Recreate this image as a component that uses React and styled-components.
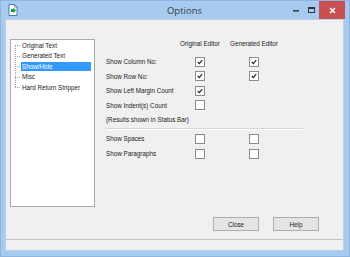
import React from 'react';
import styled, { createGlobalStyle } from 'styled-components';

const GlobalStyle = createGlobalStyle`
  html, body { margin: 0; padding: 0; }
  body { background: #a6caf0; }
`;

const Frame = styled.div`
  width: 350px;
  height: 257px;
  box-sizing: border-box;
  background: #a6caf0;
  border: 1px solid #8fb4e0;
  display: flex;
  flex-direction: column;
  padding: 0 5px 5px 4px;
  font-family: "Liberation Sans", Arial, sans-serif;
`;

const TitleBar = styled.div`
  height: 18px;
  display: grid;
  grid-template-columns: 1fr auto 1fr;
  align-items: center;
`;

const TitleLeft = styled.div`
  display: flex;
  align-items: center;
  padding-left: 3px;
`;

const TitleText = styled.div`
  font-family: "Open Sans", "Liberation Sans", sans-serif;
  font-size: 9.5px;
  color: #3a3a3a;
  padding-left: 20px;
`;

const Controls = styled.div`
  display: flex;
  justify-content: flex-end;
  align-items: flex-start;
  height: 100%;
  margin-right: -1px;
`;

const CtrlButton = styled.div`
  width: ${p => p.$w}px;
  height: 18px;
  display: flex;
  align-items: center;
  justify-content: center;
  background: ${p => p.$red ? '#c75050' : 'transparent'};
`;

const Client = styled.div`
  flex: 1;
  background: #f0f0f0;
  border: 1px solid #b9d1ea;
  display: flex;
  flex-direction: column;
`;

const Main = styled.div`
  flex: 1;
  display: flex;
  padding: 19px 0 0 4px;
`;

const TreeBox = styled.div`
  width: 85px;
  height: 168px;
  box-sizing: border-box;
  background: #fff;
  border: 1px solid #aaaaaa;
  padding: 0 0 0 3px;
`;

const TreeList = styled.ul`
  list-style: none;
  margin: 0;
  padding: 0;
  position: relative;
  &::before {
    content: '';
    position: absolute;
    left: 1px;
    top: 5px;
    height: 42px;
    border-left: 1px dotted #a0a0a0;
  }
`;

const TreeItem = styled.li`
  height: 10.5px;
  display: flex;
  align-items: center;
  font-size: 6.3px;
  color: ${p => p.$selected ? '#fff' : '#1a1a1a'};
  position: relative;
  padding-left: 7px;
  &::before {
    content: '';
    position: absolute;
    left: 1px;
    top: 5px;
    width: 5px;
    border-top: 1px dotted #a0a0a0;
  }
`;

const ItemLabel = styled.span`
  display: flex;
  align-items: center;
  height: 9.5px;
  padding: 0 1px;
  width: ${p => p.$selected ? '68px' : 'auto'};
  background: ${p => p.$selected ? '#3399ff' : 'transparent'};
`;

const Panel = styled.div`
  flex: 1;
  display: flex;
  flex-direction: column;
  padding-left: 11px;
`;

const OptionGrid = styled.div`
  display: grid;
  grid-template-columns: 68px 52px 56px;
  grid-template-rows: repeat(6, 14.5px) 4.5px repeat(2, 14.8px);
  align-items: center;
  padding-top: 1px;
  font-size: 6.3px;
  color: #1a1a1a;
`;

const HeaderCell = styled.div`
  text-align: center;
  align-self: start;
`;

const Label = styled.div`
  white-space: nowrap;
`;

const Note = styled.div`
  grid-column: 1 / 4;
  white-space: nowrap;
`;

const Separator = styled.div`
  grid-column: 1 / 4;
  height: 0;
  border-top: 1px solid #d8d8d8;
  border-bottom: 1px solid #fff;
  width: 197px;
`;

const CheckCell = styled.div`
  display: flex;
  justify-content: center;
`;

const Box = styled.div`
  width: 8px;
  height: 8px;
  background: #fff;
  border: 1px solid #8c8c8c;
  display: flex;
  align-items: center;
  justify-content: center;
`;

const ButtonRow = styled.div`
  margin-top: auto;
  display: flex;
  justify-content: flex-end;
  gap: 14px;
  padding: 0 24px 8px 0;
`;

const Button = styled.div`
  width: 46px;
  height: 14px;
  box-sizing: border-box;
  border: 1px solid #adadad;
  background: #e5e5e5;
  display: flex;
  align-items: center;
  justify-content: center;
  font-size: 6.3px;
  color: #1a1a1a;
`;

const StatusBar = styled.div`
  height: 10px;
  border-top: 1px solid #c4c4c4;
  background: #f0f0f0;
`;

const Check = ({ on }) => (
  <CheckCell>
    <Box>
      {on && (
        <svg width="6" height="6" viewBox="0 0 6 6">
          <path d="M0.8 3 L2.3 4.6 L5.2 1.2" fill="none" stroke="#222" strokeWidth="1.2" />
        </svg>
      )}
    </Box>
  </CheckCell>
);

const AppIcon = () => (
  <svg width="10" height="12" viewBox="0 0 10 12">
    <path d="M1 0.5 H6.5 L9 3 V11.5 H1 Z" fill="#fff" stroke="#4a7fb8" strokeWidth="1" />
    <path d="M6.5 0.5 V3 H9" fill="none" stroke="#4a7fb8" strokeWidth="0.8" />
    <path d="M3 5 H5.5 V3.8 L8 6.5 L5.5 9.2 V8 H3 Z" fill="#2e9e3a" />
  </svg>
);

const treeItems = ['Original Text', 'Generated Text', 'Show/Hide', 'Misc', 'Hard Return Stripper'];

const rows = [
  { label: 'Show Column No:', a: true, b: true },
  { label: 'Show Row No:', a: true, b: true },
  { label: 'Show Left Margin Count', a: true },
  { label: 'Show Indent(s) Count', a: false },
];

const rows2 = [
  { label: 'Show Spaces', a: false, b: false },
  { label: 'Show Paragraphs', a: false, b: false },
];

const renderRow = r => (
  <React.Fragment key={r.label}>
    <Label>{r.label}</Label>
    <Check on={r.a} />
    {r.b === undefined ? <div /> : <Check on={r.b} />}
  </React.Fragment>
);

export default function App() {
  return (
    <>
      <GlobalStyle />
      <Frame>
        <TitleBar>
          <TitleLeft><AppIcon /></TitleLeft>
          <TitleText>Options</TitleText>
          <Controls>
            <CtrlButton $w={15}>
              <svg width="7" height="3" viewBox="0 0 7 3"><rect x="0" y="1" width="6" height="1.5" fill="#333" /></svg>
            </CtrlButton>
            <CtrlButton $w={15}>
              <svg width="8" height="7" viewBox="0 0 8 7"><rect x="0.5" y="0.5" width="6" height="5" fill="none" stroke="#333" strokeWidth="1" /><rect x="0.5" y="0.5" width="6" height="1.5" fill="#333" /></svg>
            </CtrlButton>
            <CtrlButton $w={26} $red>
              <svg width="7" height="7" viewBox="0 0 7 7"><path d="M1 1 L6 6 M6 1 L1 6" stroke="#fff" strokeWidth="1.6" /></svg>
            </CtrlButton>
          </Controls>
        </TitleBar>
        <Client>
          <Main>
            <TreeBox>
              <TreeList>
                {treeItems.map(t => (
                  <TreeItem key={t} $selected={t === 'Show/Hide'}>
                    <ItemLabel $selected={t === 'Show/Hide'}>{t}</ItemLabel>
                  </TreeItem>
                ))}
              </TreeList>
            </TreeBox>
            <Panel>
              <OptionGrid>
                <div />
                <HeaderCell>Original Editor</HeaderCell>
                <HeaderCell>Generated Editor</HeaderCell>
                {rows.map(renderRow)}
                <Note>(Results shown in Status Bar)</Note>
                <Separator />
                {rows2.map(renderRow)}
              </OptionGrid>
              <ButtonRow>
                <Button>Close</Button>
                <Button>Help</Button>
              </ButtonRow>
            </Panel>
          </Main>
          <StatusBar />
        </Client>
      </Frame>
    </>
  );
}
